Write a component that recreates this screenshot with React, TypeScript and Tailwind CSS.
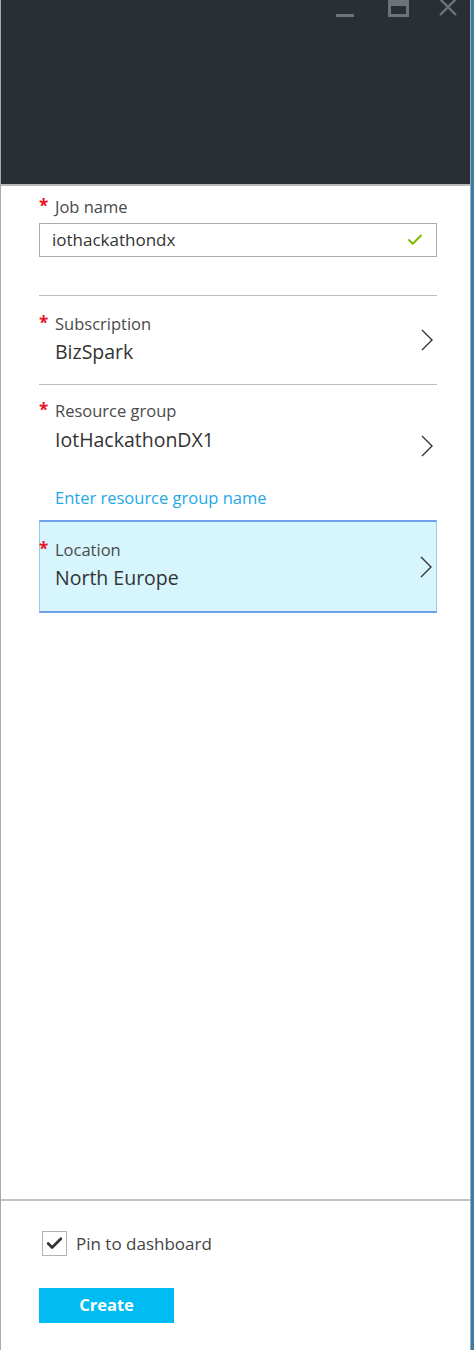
import { Check } from 'lucide-react';

function Chevron() {
  return (
    <svg width="12" height="22" viewBox="0 0 12 22" fill="none" className="shrink-0">
      <path d="M1 1 L11 11 L1 21" stroke="#333" strokeWidth="1.4" />
    </svg>
  );
}

function Label({ text }: { text: string }) {
  return (
    <div className="flex items-start h-[20px] leading-[20px]">
      <span className="w-[16px] text-[#e81123] text-[17px] leading-[18px] font-bold">*</span>
      <span className="text-[16.5px] text-[#4a4a4a]">{text}</span>
    </div>
  );
}

export default function App() {
  return (
    <div
      className="w-[474px] h-[1350px] flex bg-white"
      style={{ fontFamily: '"Open Sans", "Noto Sans", sans-serif' }}
    >
      <div className="flex-1 flex flex-col border-l border-r border-[#a9a9a9]">
        {/* Header */}
        <div className="h-[184px] bg-[#292f34] relative shrink-0">
          <div className="absolute left-[335px] top-[14px] w-[18px] h-[3px] bg-[#6e7378]" />
          <div className="absolute left-[387px] top-0 w-[21px] h-[17px] border-[3px] border-t-[6px] border-[#6e7378]" />
          <svg className="absolute left-[438px] top-0" width="19" height="16" viewBox="0 0 19 16">
            <path d="M1 -1 L17 15 M17 -1 L1 15" stroke="#6e7378" strokeWidth="2.4" />
          </svg>
        </div>
        <div className="h-[2px] bg-[#b5b9bc] shrink-0" />

        {/* Form */}
        <div className="flex-1 flex flex-col pl-[38px] pr-[33px]">
          <div className="pt-[11px]">
            <Label text="Job name" />
            <div className="mt-[6px] h-[34px] border border-[#ababab] flex items-center px-[12px] justify-between">
              <span className="text-[17px] text-[#333]">iothackathondx</span>
              <Check size={18} strokeWidth={2.6} color="#7fba00" />
            </div>
          </div>

          <div className="mt-[38px] h-[1px] bg-[#bcbcbc]" />
          <div className="flex items-center justify-between h-[88px] pr-[4px]">
            <div className="flex flex-col pb-[2px]">
              <Label text="Subscription" />
              <span className="pl-[16px] mt-[6px] text-[19.5px] leading-[24px] text-[#333]">BizSpark</span>
            </div>
            <Chevron />
          </div>
          <div className="h-[1px] bg-[#bcbcbc]" />

          <div className="flex justify-between pr-[4px] pt-[16px]">
            <div className="flex flex-col">
              <Label text="Resource group" />
              <span className="pl-[16px] mt-[7px] text-[19.5px] leading-[24px] text-[#333]">IotHackathonDX1</span>
            </div>
            <div className="pt-[34px]">
              <Chevron />
            </div>
          </div>
          <div className="pl-[16px] mt-[31px] text-[16.5px] leading-[20px] text-[#1fa8e6]">
            Enter resource group name
          </div>

          <div className="mt-[12px] h-[93px] bg-[#d7f5fd] border border-[#9cc7ee] border-t-2 border-b-2 border-t-[#6ea1ea] border-b-[#6ea1ea] flex items-center justify-between pr-[4px]">
            <div className="flex flex-col pb-[4px] -ml-[1px]">
              <Label text="Location" />
              <span className="pl-[16px] mt-[6px] text-[19.5px] leading-[24px] text-[#333]">North Europe</span>
            </div>
            <Chevron />
          </div>
        </div>

        {/* Footer */}
        <div className="h-[2px] bg-[#c3c3c3] shrink-0" />
        <div className="h-[149px] shrink-0 pl-[38px] flex flex-col">
          <div className="mt-[30px] flex items-center">
            <div className="ml-[3px] w-[25px] h-[25px] border border-[#b3b3b3] flex items-center justify-center">
              <Check size={19} strokeWidth={3.4} color="#333" />
            </div>
            <span className="ml-[9px] text-[17px] text-[#444]">Pin to dashboard</span>
          </div>
          <div className="mt-[31px] w-[135px] h-[35px] bg-[#00bcf2] flex items-center justify-center text-white font-bold text-[16.5px]">
            Create
          </div>
        </div>
      </div>
      <div className="w-[3px] bg-[#3a7ea8] shrink-0" />
    </div>
  );
}
